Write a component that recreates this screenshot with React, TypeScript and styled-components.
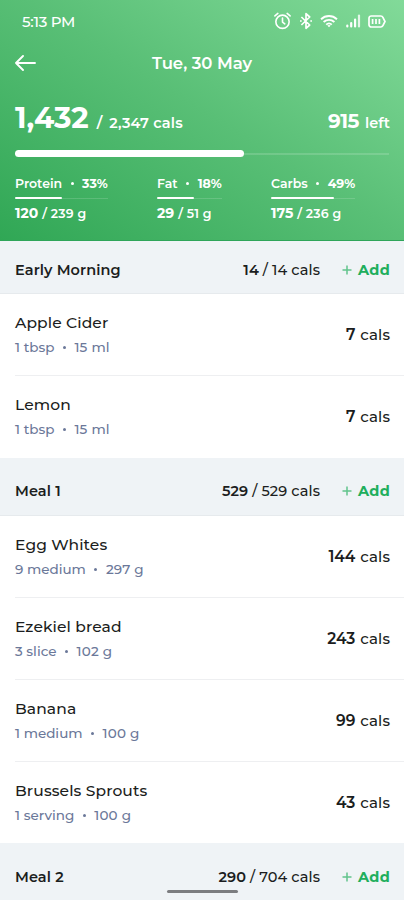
import React from "react";
import styled, { createGlobalStyle } from "styled-components";

const GlobalStyle = createGlobalStyle`
  * { box-sizing: border-box; }
  body { margin: 0; background: #fff; font-family: Montserrat, Inter, sans-serif; color: #1b1d20; }
`;

const Screen = styled.div`
  position: relative;
  width: 404px;
  height: 900px;
  overflow: hidden;
  background: #fff;
`;

/* Text run: size, weight and tracking differ between uses. */
const Text = styled.span<{ $size: number; $weight?: number; $track?: number; $gap?: number }>`
  font-size: ${(p) => p.$size}px;
  font-weight: ${(p) => p.$weight ?? 500};
  letter-spacing: ${(p) => p.$track ?? 0}px;
  margin-left: ${(p) => p.$gap ?? 0}px;
  white-space: nowrap;
`;

const Header = styled.header`
  height: 241px;
  padding: 0 14px 0 15px;
  color: #fff;
  background: linear-gradient(32deg, #30a755 0%, #59bf76 52%, #82da99 100%);
  border-bottom: 1px solid #2fa55a;
`;

const StatusBar = styled.div`
  display: flex;
  align-items: center;
  justify-content: space-between;
  height: 42px;
  padding: 0 4px 0 7px;
`;

const StatusIcons = styled.div`
  display: grid;
  grid-template-columns: 26px 21px 26px 22px 18px;
  align-items: center;
  svg { display: block; }
`;

const TitleBar = styled.div`
  display: grid;
  grid-template-columns: 60px 1fr 61px;
  align-items: center;
  height: 42px;
  text-align: center;
  svg { display: block; }
`;

const Totals = styled.div`
  display: flex;
  align-items: baseline;
  height: 66px;
  padding-top: 15px;
`;

const Remaining = styled.div`
  margin-left: auto;
`;

const Track = styled.div<{ $w: number; $h: number; $line: number }>`
  display: flex;
  align-items: center;
  width: ${(p) => p.$w}px;
  height: ${(p) => p.$h}px;
  background: linear-gradient(rgba(255, 255, 255, 0.15), rgba(255, 255, 255, 0.15)) center / 100% ${(p) => p.$line}px no-repeat;
`;

const Fill = styled.div<{ $w: number }>`
  width: ${(p) => p.$w}px;
  height: 100%;
  border-radius: 4px;
  background: #fff;
`;

const Macros = styled.div`
  display: grid;
  grid-template-columns: 142px 114px 1fr;
  padding-top: 17px;
`;

const MacroLine = styled.div`
  display: flex;
  align-items: baseline;
  height: 23px;
  line-height: 19px;
`;

const MacroValue = styled.div`
  padding-top: 5px;
  line-height: 18px;
  white-space: nowrap;
`;

const Dot = styled.i<{ $gap: number; $lift?: number }>`
  align-self: center;
  flex: none;
  width: 3px;
  height: 3px;
  margin: 0 ${(p) => p.$gap}px ${(p) => p.$lift ?? 0}px;
  border-radius: 50%;
  background: currentColor;
`;

const SectionBar = styled.div<{ $first?: boolean; $last?: boolean }>`
  display: flex;
  align-items: center;
  height: ${(p) => (p.$first ? 53 : 58)}px;
  padding: ${(p) => (p.$first ? 5 : p.$last ? 11 : 9)}px 14px 0 15px;
  background: #eff3f6;
  border-bottom: 1px solid #e6eaed;
`;

const SectionCals = styled.div`
  margin-left: auto;
  padding-bottom: 1px;
  white-space: nowrap;
`;

const AddButton = styled.button`
  display: flex;
  align-items: center;
  gap: 6px;
  width: 48px;
  margin-left: 22px;
  padding: 0;
  border: 0;
  background: none;
  color: #20ae5c;
  font-family: inherit;
  svg { display: block; flex: none; }
`;

const FoodRow = styled.div<{ $last?: boolean; $short?: boolean }>`
  display: flex;
  align-items: flex-start;
  height: ${(p) => (p.$short ? 81 : 82)}px;
  margin-left: 15px;
  padding: 18px 14px 0 0;
  border-bottom: 1px solid ${(p) => (p.$last ? "transparent" : "#eeeff1")};
`;

const FoodText = styled.div`
  display: flex;
  flex-direction: column;
  gap: 4px;
`;

const FoodName = styled.div`
  line-height: 21px;
`;

const FoodSub = styled.div`
  display: flex;
  align-items: baseline;
  color: #6b7899;
  line-height: 20px;
`;

const FoodCals = styled.div`
  margin-left: auto;
  padding-top: 13px;
  line-height: 20px;
  white-space: nowrap;
`;

const HomeIndicator = styled.div`
  position: absolute;
  left: 167px;
  bottom: 7px;
  width: 71px;
  height: 3px;
  border-radius: 2px;
  background: #7c7d80;
`;

const AlarmIcon = () => (
  <svg width="19" height="20" viewBox="0 0 20 20" fill="none" stroke="#fff" strokeWidth="1.7" strokeLinecap="round" strokeLinejoin="round">
    <circle cx="10" cy="10.8" r="7" />
    <path d="M10 6.800v4.300l2.400 1.900M2 4.600l3.100-2.600M18 4.600L14.900 2" />
  </svg>
);

const BluetoothIcon = () => (
  <svg width="14" height="18" viewBox="0 0 14 18" fill="none" stroke="#fff" strokeWidth="1.700" strokeLinejoin="round">
    <path d="M2.400 5l8.300 8L7 16.300V1.700L10.700 5l-8.300 8" />
    <path d="M1 9h1.700M11.300 9H13" />
  </svg>
);

const WifiIcon = () => (
  <svg width="18" height="14" viewBox="0 0 18 14" fill="none" stroke="#fff" strokeWidth="1.900">
    <path d="M1 5.200c4.700-4.300 11.300-4.300 16 0M3.600 8c3.200-2.800 7.600-2.800 10.800 0M6.200 10.600c1.700-1.500 3.900-1.500 5.600 0" />
    <path d="M7.300 11.500L9 13.300l1.700-1.800c-1-.8-2.400-.8-3.400 0z" fill="#fff" stroke="none" />
  </svg>
);

const SignalIcon = () => (
  <svg width="15" height="14" viewBox="0 0 15 14" stroke="#fff" strokeWidth="2.200" strokeLinecap="round">
    <path d="M1.300 11.500v1M5.200 9v3.500M9.100 5.500v7" />
    <path d="M13 1.500v11" opacity=".8" />
  </svg>
);

const BatteryIcon = () => (
  <svg width="18" height="13" viewBox="0 0 18 13" fill="none" stroke="#fff" strokeWidth="1.700">
    <path d="M3.300 1h9.500c1 0 1.700.5 2.100 1.300L17 6.500l-2.100 4.200c-.4.8-1.100 1.300-2.100 1.300H3.300C2 12 1 11 1 9.700V3.300C1 2 2 1 3.300 1z" />
    <path d="M4.600 4v5M8 4v5M11.400 4v5" />
  </svg>
);

const BackIcon = () => (
  <svg width="22" height="18" viewBox="0 0 22 18" fill="none" stroke="#fff" strokeWidth="1.900" strokeLinecap="round" strokeLinejoin="round">
    <path d="M20 9H1M8 2L1 9l7 7" />
  </svg>
);

const PlusIcon = () => (
  <svg width="10" height="10" viewBox="0 0 10 10" stroke="#62c48c" strokeWidth="1.500">
    <path d="M5 .5v9M.5 5h9" />
  </svg>
);

type MacroProps = {
  name: string; fill: number; width: number; value: string; goal: string; pct: string;
};

const Macro = (m: MacroProps) => (
  <div>
    <MacroLine>
      <Text $size={12.5} $weight={600}>{m.name}</Text>
      <Dot $gap={8.5} $lift={5} />
      <Text $size={12.5} $weight={700}>{m.pct}</Text>
    </MacroLine>
    <Track $w={m.width} $h={2} $line={1}><Fill $w={m.fill} /></Track>
    <MacroValue>
      <Text $size={14} $weight={700}>{m.value}</Text>
      <Text $size={12.5} $weight={600} $gap={4} $track={0.2}>{m.goal}</Text>
    </MacroValue>
  </div>
);

const macros: MacroProps[] = [
  { name: "Protein", pct: "33%", fill: 47, width: 93, value: "120", goal: "/ 239 g" },
  { name: "Fat", pct: "18%", fill: 37, width: 65, value: "29", goal: "/ 51 g" },
  { name: "Carbs", pct: "49%", fill: 63, width: 84, value: "175", goal: "/ 236 g" },
];

type Food = { name: string; qty: string; amount: string; cals: string };
type Meal = { title: string; eaten: string; goal: string; foods: Food[] };

const meals: Meal[] = [
  {
    title: "Early Morning", eaten: "14", goal: "/ 14 cals",
    foods: [
      { name: "Apple Cider", qty: "1 tbsp", amount: "15 ml", cals: "7" },
      { name: "Lemon", qty: "1 tbsp", amount: "15 ml", cals: "7" },
    ],
  },
  {
    title: "Meal 1", eaten: "529", goal: "/ 529 cals",
    foods: [
      { name: "Egg Whites", qty: "9 medium", amount: "297 g", cals: "144" },
      { name: "Ezekiel bread", qty: "3 slice", amount: "102 g", cals: "243" },
      { name: "Banana", qty: "1 medium", amount: "100 g", cals: "99" },
      { name: "Brussels Sprouts", qty: "1 serving", amount: "100 g", cals: "43" },
    ],
  },
  { title: "Meal 2", eaten: "290", goal: "/ 704 cals", foods: [] },
];

export default function App() {
  return (
    <Screen>
      <GlobalStyle />
      <Header>
        <StatusBar>
          <Text $size={15} $weight={500} $track={-0.3}>5:13 PM</Text>
          <StatusIcons>
            <AlarmIcon /><BluetoothIcon /><WifiIcon /><SignalIcon /><BatteryIcon />
          </StatusIcons>
        </StatusBar>
        <TitleBar>
          <BackIcon />
          <Text $size={16.5} $weight={600}>Tue, 30 May</Text>
        </TitleBar>
        <Totals>
          <Text $size={29.5} $weight={700} $track={-0.1}>1,432</Text>
          <Text $size={15} $weight={600} $gap={8}>/</Text>
          <Text $size={14.5} $weight={600} $gap={7} $track={0.2}>2,347 cals</Text>
          <Remaining>
            <Text $size={20} $weight={700} $track={-0.5}>915</Text>
            <Text $size={14.5} $weight={600} $gap={6} $track={0.1}>left</Text>
          </Remaining>
        </Totals>
        <Track $w={374} $h={7} $line={2}><Fill $w={229} /></Track>
        <Macros>{macros.map((m) => <Macro key={m.name} {...m} />)}</Macros>
      </Header>
      {meals.map((meal, i) => (
        <section key={meal.title}>
          <SectionBar $first={i === 0} $last={i === meals.length - 1}>
            <Text $size={14.5} $weight={600} $track={0.1}>{meal.title}</Text>
            <SectionCals>
              <Text $size={14.5} $weight={600} $track={0.1}>{meal.eaten}</Text>
              <Text $size={14.5} $weight={500} $gap={4} $track={0.1}>{meal.goal}</Text>
            </SectionCals>
            <AddButton><PlusIcon /><Text $size={14.5} $weight={700} $track={0.3}>Add</Text></AddButton>
          </SectionBar>
          {meal.foods.map((f, j) => (
            <FoodRow key={f.name} $last={j === meal.foods.length - 1} $short={i === 1 && j === 3}>
              <FoodText>
                <FoodName><Text $size={15.5} $weight={500} $track={0.1}>{f.name}</Text></FoodName>
                <FoodSub>
                  <Text $size={13.5}>{f.qty}</Text>
                  <Dot $gap={8.5} />
                  <Text $size={13.5} $track={0.2}>{f.amount}</Text>
                </FoodSub>
              </FoodText>
              <FoodCals>
                <Text $size={15.5} $weight={600}>{f.cals}</Text>
                <Text $size={15} $weight={500} $gap={5} $track={0.1}>cals</Text>
              </FoodCals>
            </FoodRow>
          ))}
        </section>
      ))}
      <HomeIndicator />
    </Screen>
  );
}
